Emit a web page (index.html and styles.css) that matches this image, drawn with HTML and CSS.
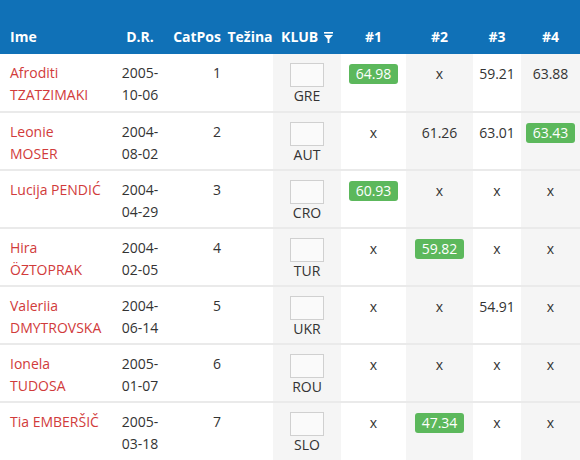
FILE: index.html
```html
<!DOCTYPE html>
<html lang="hr">
<head>
    <meta charset="UTF-8">
    <meta name="viewport" content="width=device-width, initial-scale=1.0">
    <title>Rezultati</title>
    <link rel="stylesheet" href="styles.css">
</head>
<body>
    <table class="results">
        <colgroup>
            <col class="c-name">
            <col class="c-dr">
            <col class="c-pos">
            <col class="c-tez">
            <col class="c-klub">
            <col class="c-r1">
            <col class="c-r2">
            <col class="c-r3">
            <col class="c-r4">
        </colgroup>
        <thead>
            <tr>
                <th class="name">Ime</th>
                <th>D.R.</th>
                <th class="pos">CatPos</th>
                <th>Težina</th>
                <th class="klub">KLUB
                    <svg class="filter" width="9" height="11" viewBox="0 0 9 11">
                        <rect x="0" y="0" width="9" height="1.6" fill="#fff"/>
                        <path d="M0 3 H9 L5.4 7 V11 H3.6 V7 Z" fill="#fff"/>
                    </svg>
                </th>
                <th>#1</th>
                <th>#2</th>
                <th>#3</th>
                <th>#4</th>
            </tr>
        </thead>
        <tbody>
            <tr>
                <td class="name">Afroditi TZATZIMAKI</td>
                <td class="dr">2005-<br>10-06</td>
                <td class="pos">1</td>
                <td></td>
                <td class="klub"><div class="flag"></div>GRE</td>
                <td class="score"><span class="best">64.98</span></td>
                <td class="score alt">x</td>
                <td class="score">59.21</td>
                <td class="score alt">63.88</td>
            </tr>
            <tr>
                <td class="name">Leonie MOSER</td>
                <td class="dr">2004-<br>08-02</td>
                <td class="pos">2</td>
                <td></td>
                <td class="klub"><div class="flag"></div>AUT</td>
                <td class="score">x</td>
                <td class="score alt">61.26</td>
                <td class="score">63.01</td>
                <td class="score alt"><span class="best">63.43</span></td>
            </tr>
            <tr>
                <td class="name">Lucija PENDIĆ</td>
                <td class="dr">2004-<br>04-29</td>
                <td class="pos">3</td>
                <td></td>
                <td class="klub"><div class="flag"></div>CRO</td>
                <td class="score"><span class="best">60.93</span></td>
                <td class="score alt">x</td>
                <td class="score">x</td>
                <td class="score alt">x</td>
            </tr>
            <tr>
                <td class="name">Hira ÖZTOPRAK</td>
                <td class="dr">2004-<br>02-05</td>
                <td class="pos">4</td>
                <td></td>
                <td class="klub"><div class="flag"></div>TUR</td>
                <td class="score">x</td>
                <td class="score alt"><span class="best">59.82</span></td>
                <td class="score">x</td>
                <td class="score alt">x</td>
            </tr>
            <tr>
                <td class="name">Valeriia DMYTROVSKA</td>
                <td class="dr">2004-<br>06-14</td>
                <td class="pos">5</td>
                <td></td>
                <td class="klub"><div class="flag"></div>UKR</td>
                <td class="score">x</td>
                <td class="score alt">x</td>
                <td class="score">54.91</td>
                <td class="score alt">x</td>
            </tr>
            <tr>
                <td class="name">Ionela TUDOSA</td>
                <td class="dr">2005-<br>01-07</td>
                <td class="pos">6</td>
                <td></td>
                <td class="klub"><div class="flag"></div>ROU</td>
                <td class="score">x</td>
                <td class="score alt">x</td>
                <td class="score">x</td>
                <td class="score alt">x</td>
            </tr>
            <tr>
                <td class="name">Tia EMBERŠIČ</td>
                <td class="dr">2005-<br>03-18</td>
                <td class="pos">7</td>
                <td></td>
                <td class="klub"><div class="flag"></div>SLO</td>
                <td class="score">x</td>
                <td class="score alt"><span class="best">47.34</span></td>
                <td class="score">x</td>
                <td class="score alt">x</td>
            </tr>
        </tbody>
    </table>
</body>
</html>
```

FILE: styles.css
```css
body {
    margin: 0;
    font-family: "Open Sans", Lato, sans-serif;
    font-size: 14px;
    color: #333;
    background: #fff;
}
.results {
    width: 580px;
    table-layout: fixed;
    border-collapse: collapse;
}
.c-name { width: 110px; }
.c-dr { width: 60px; }
.c-pos { width: 57px; }
.c-tez { width: 46px; }
.c-klub { width: 68px; }
.c-r1 { width: 65px; }
.c-r2 { width: 67px; }
.c-r3 { width: 48px; }
.c-r4 { width: 59px; }
.results th {
    height: 54px;
    box-sizing: border-box;
    padding: 0 0 7px;
    background: #1071b7;
    color: #fff;
    font-weight: bold;
    vertical-align: bottom;
    text-align: center;
    white-space: nowrap;
    line-height: 20px;
}
.results th.name {
    text-align: left;
    padding-left: 10px;
}
.results th.pos {
    text-align: right;
    padding-right: 6px;
}
.filter {
    margin-left: 2px;
    vertical-align: -1px;
}
.results td {
    height: 58px;
    box-sizing: border-box;
    padding: 8px 0 0;
    vertical-align: top;
    line-height: 22px;
    border-top: 2px solid #eaeaea;
    text-align: center;
}
.results tbody tr:first-child td {
    border-top: 0;
}
.results td.name {
    text-align: left;
    padding: 8px 6px 0 10px;
    color: #d13b3b;
}
.results td.pos {
    text-align: right;
    padding-right: 6px;
}
.results td.klub,
.results td.alt {
    background: #f5f5f5;
}
.results td.klub {
    padding-top: 9px;
    line-height: 18px;
}
.flag {
    width: 32px;
    height: 22px;
    margin: 0 auto;
    border: 1px solid #d0d0d0;
    background: #fafafa;
}
.results td.score {
    padding-top: 9px;
}
.best {
    display: inline-block;
    padding: 0 7px;
    line-height: 20px;
    background: #5cb85c;
    color: #fff;
    border-radius: 3px;
}
```
